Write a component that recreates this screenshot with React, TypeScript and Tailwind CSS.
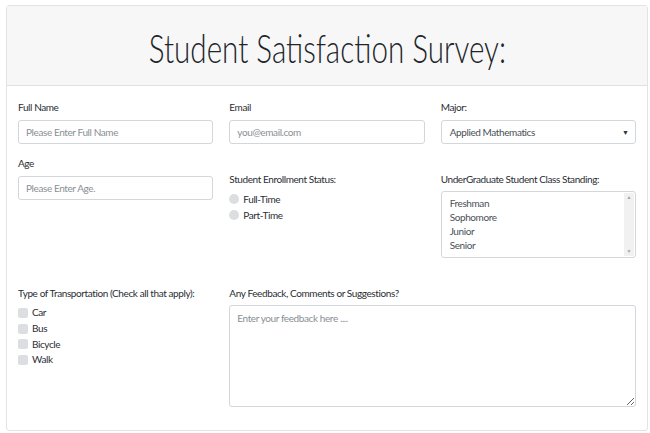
const font = { fontFamily: 'Lato, "Open Sans", sans-serif' };

function Label({ children }: { children: React.ReactNode }) {
  return <div className="whitespace-nowrap text-[10px] leading-[14px] tracking-[-0.4px] text-[#2a2e33]">{children}</div>;
}

function TextInput({ placeholder }: { placeholder: string }) {
  return (
    <input
      className="mt-[6px] h-[24px] w-full rounded-[3px] border border-[#d3d7db] bg-white px-[7px] text-[10px] tracking-[-0.4px] text-[#495057] outline-none placeholder:text-[#8a8f94]"
      placeholder={placeholder}
    />
  );
}

function Radio({ label }: { label: string }) {
  return (
    <div className="flex h-[16px] items-center gap-[4px]">
      <span className="h-[10px] w-[10px] rounded-full bg-[#dcdee1]" />
      <span className="text-[10px] tracking-[-0.4px] text-[#2a2e33]">{label}</span>
    </div>
  );
}

function Check({ label }: { label: string }) {
  return (
    <div className="flex h-[15.7px] items-center gap-[4px]">
      <span className="h-[10px] w-[10px] rounded-[2px] bg-[#dcdee1]" />
      <span className="text-[10px] tracking-[-0.4px] text-[#2a2e33]">{label}</span>
    </div>
  );
}

export default function App() {
  return (
    <div className="min-h-[433px] bg-white pl-[6px] pt-[5px]" style={font}>
      <div className="w-[642px] rounded-[3px] border border-[#e2e3e4] bg-white">
        <div className="flex h-[80px] items-center justify-center border-b border-[#dfe0e1] bg-[#f7f7f8] pt-[4px]">
          <h1 className="scale-x-[0.74] whitespace-nowrap text-[40px] font-light leading-none text-[#212529]">
            Student Satisfaction Survey:
          </h1>
        </div>
        <div className="px-[11px] pb-[23px] pt-[14px]">
          <div className="grid grid-cols-3 items-start gap-x-[16px]">
            <div className="flex flex-col">
              <Label>Full Name</Label>
              <TextInput placeholder="Please Enter Full Name" />
              <div className="mt-[12px]">
                <Label>Age</Label>
              </div>
              <TextInput placeholder="Please Enter Age." />
            </div>
            <div className="flex flex-col">
              <Label>Email</Label>
              <TextInput placeholder="you@email.com" />
              <div className="mt-[28px]">
                <Label>Student Enrollment Status:</Label>
              </div>
              <div className="mt-[5px] flex flex-col">
                <Radio label="Full-Time" />
                <Radio label="Part-Time" />
              </div>
            </div>
            <div className="flex flex-col">
              <Label>Major:</Label>
              <div className="mt-[6px] flex h-[24px] items-center justify-between rounded-[3px] border border-[#d3d7db] bg-white pl-[8px] pr-[6px]">
                <span className="text-[10px] tracking-[-0.4px] text-[#495057]">Applied Mathematics</span>
                <span className="text-[7px] text-[#333]">▼</span>
              </div>
              <div className="mt-[28px]">
                <Label>UnderGraduate Student Class Standing:</Label>
              </div>
              <div className="mt-[5px] flex h-[67px] rounded-[3px] border border-[#d3d7db] bg-white">
                <div className="flex flex-1 flex-col pl-[8px] pt-[4px] text-[10px] leading-[14px] tracking-[-0.4px] text-[#495057]">
                  <span>Freshman</span>
                  <span>Sophomore</span>
                  <span>Junior</span>
                  <span>Senior</span>
                </div>
                <div className="my-px mr-px flex w-[10px] flex-col items-center justify-between bg-[#f1f1f1] py-[2px] text-[5px] leading-none text-[#a3a3a3]">
                  <span>▲</span>
                  <span>▼</span>
                </div>
              </div>
            </div>
          </div>
          <div className="mt-[28px] grid grid-cols-3 items-start gap-x-[16px]">
            <div className="flex flex-col">
              <Label>Type of Transportation (Check all that apply):</Label>
              <div className="mt-[5px] flex flex-col">
                <Check label="Car" />
                <Check label="Bus" />
                <Check label="Bicycle" />
                <Check label="Walk" />
              </div>
            </div>
            <div className="col-span-2 flex flex-col">
              <Label>Any Feedback, Comments or Suggestions?</Label>
              <textarea
                className="mt-[5px] h-[102px] w-full rounded-[3px] border border-[#d3d7db] bg-white px-[7px] py-[5px] text-[10px] tracking-[-0.4px] text-[#495057] outline-none placeholder:text-[#8a8f94]"
                placeholder="Enter your feedback here ...."
              />
            </div>
          </div>
        </div>
      </div>
    </div>
  );
}
